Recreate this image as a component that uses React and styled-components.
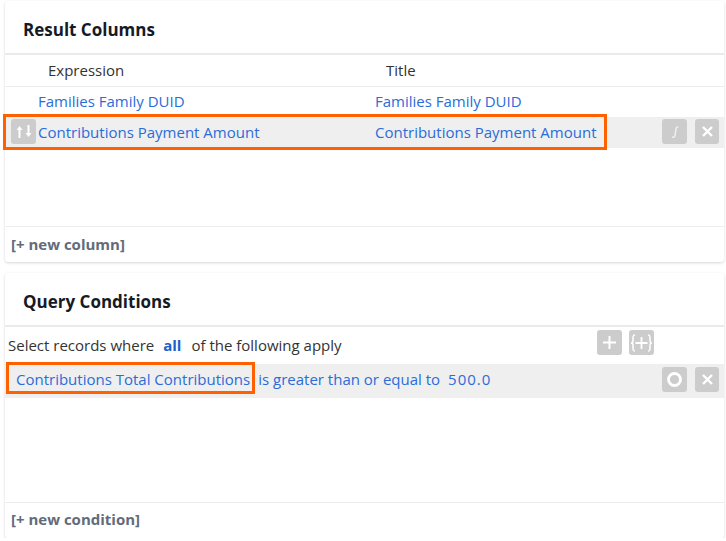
import styled, { createGlobalStyle } from "styled-components";

const GlobalStyle = createGlobalStyle`
  html, body {
    margin: 0;
    padding: 0;
    background: #fff;
  }
  body {
    font-family: "Open Sans", "Liberation Sans", sans-serif;
    font-size: 15px;
    color: #333;
  }
`;

function ArrowsIcon() {
  return (
    <svg width="16" height="13" viewBox="0 0 16 13" fill="none" stroke="#fff" strokeWidth="2">
      <path d="M3.500 13V4" />
      <path d="M12.500 0v9" />
      <path d="M.5 5 3.500 1 6.500 5" fill="#fff" stroke="none" />
      <path d="M9.500 8 12.500 12 15.500 8" fill="#fff" stroke="none" />
    </svg>
  );
}

function FunctionIcon() {
  return (
    <svg width="8" height="12" viewBox="0 0 8 12" fill="none" stroke="#eeeeee" strokeWidth="1.600">
      <path d="M7.500 1C5.800.7 5.200 1.400 5 3L4 9.500C3.800 11 3 11.500 1 11" />
    </svg>
  );
}

function CloseIcon() {
  return (
    <svg width="11" height="11" viewBox="0 0 11 11" fill="none" stroke="#fff" strokeWidth="2.400">
      <path d="M1 1l9 9M10 1l-9 9" />
    </svg>
  );
}

function PlusIcon() {
  return (
    <svg width="13" height="13" viewBox="0 0 13 13" fill="none" stroke="#fff" strokeWidth="2">
      <path d="M6.500 0v13M0 6.500h13" />
    </svg>
  );
}

function GroupIcon() {
  return (
    <svg width="23" height="18" viewBox="0 0 23 18" fill="none" stroke="#fff" strokeWidth="1.500">
      <path d="M5 1C3 1 3 2 3 4v3C3 8 2.400 9 1 9c1.400 0 2 1 2 2v3c0 2 0 3 2 3" />
      <path d="M18 1c2 0 2 1 2 3v3c0 1 .6 2 2 2-1.400 0-2 1-2 2v3c0 2 0 3-2 3" />
      <path d="M11.500 3v12M5.500 9h12" strokeWidth="1.800" />
    </svg>
  );
}

function CircleIcon() {
  return (
    <svg width="15" height="15" viewBox="0 0 15 15" fill="none" stroke="#fff" strokeWidth="2.800">
      <circle cx="7.500" cy="7.500" r="6" />
    </svg>
  );
}

export default function App() {
  return (
    <Page>
      <GlobalStyle />
      <Card>
        <CardHeader>Result Columns</CardHeader>
        <ColumnHead>
          <HeadCell>Expression</HeadCell>
          <HeadCell>Title</HeadCell>
        </ColumnHead>
        <ColumnBody>
          <ColumnRow>
            <Link>Families Family DUID</Link>
            <Link>Families Family DUID</Link>
          </ColumnRow>
          <ColumnRow $active>
            <Handle>
              <ArrowsIcon />
            </Handle>
            <Link>Contributions Payment Amount</Link>
            <Link>Contributions Payment Amount</Link>
            <RowActions>
              <IconButton>
                <FunctionIcon />
              </IconButton>
              <IconButton $narrow>
                <CloseIcon />
              </IconButton>
            </RowActions>
            <ColumnHighlight />
          </ColumnRow>
        </ColumnBody>
        <CardFooter>[+ new column]</CardFooter>
      </Card>

      <Card $second>
        <CardHeader>Query Conditions</CardHeader>
        <ConditionBody>
          <MatchRow>
            <span>Select records where</span>
            <MatchKeyword>all</MatchKeyword>
            <span>of the following apply</span>
            <MatchActions>
              <IconButton>
                <PlusIcon />
              </IconButton>
              <IconButton>
                <GroupIcon />
              </IconButton>
            </MatchActions>
          </MatchRow>
          <ConditionRow>
            <Link>Contributions Total Contributions</Link>
            <Link>is greater than or equal to</Link>
            <Link $value>500.0</Link>
            <RowActions $condition>
              <IconButton>
                <CircleIcon />
              </IconButton>
              <IconButton $narrow>
                <CloseIcon />
              </IconButton>
            </RowActions>
            <ConditionHighlight />
          </ConditionRow>
        </ConditionBody>
        <CardFooter $second>[+ new condition]</CardFooter>
      </Card>
    </Page>
  );
}

const Page = styled.div`
  width: 719px;
  padding: 1px 2px 0 5px;
  display: flex;
  flex-direction: column;
  gap: 11px;
`;

const Card = styled.section`
  height: ${(props) => (props.$second ? "265px" : "261px")};
  display: flex;
  flex-direction: column;
  background: #fff;
  border-radius: 3px;
  box-shadow: 0 1px 3px rgba(0, 0, 0, 0.16);
`;

const CardHeader = styled.h2`
  box-sizing: border-box;
  height: 54px;
  margin: 0;
  padding: 4px 18px 0;
  display: flex;
  align-items: center;
  border-bottom: 2px solid #eaeaea;
  font-size: 17px;
  font-weight: 700;
  color: #151b26;
`;

const ColumnHead = styled.div`
  box-sizing: border-box;
  height: 32px;
  padding: 0 0 2px 43px;
  display: grid;
  grid-template-columns: 338px 1fr;
  align-items: center;
  border-bottom: 1px solid #ededed;
`;

const HeadCell = styled.span`
  color: #333;
`;

const ColumnBody = styled.div`
  flex: 1;
`;

const ColumnRow = styled.div`
  position: relative;
  box-sizing: border-box;
  height: ${(props) => (props.$active ? "31px" : "30px")};
  padding: 0 0 2px 33px;
  display: grid;
  grid-template-columns: 337px 1fr;
  align-items: center;
  background: ${(props) => (props.$active ? "#efefef" : "transparent")};
`;

const Link = styled.a`
  color: #2b6cd9;
  white-space: nowrap;
  letter-spacing: ${(props) => (props.$value ? "1px" : "normal")};
`;

const IconButton = styled.button`
  width: ${(props) => (props.$narrow ? "24px" : "25px")};
  height: 25px;
  padding: 0;
  border: 0;
  border-radius: 3px;
  background: #cccccc;
  display: flex;
  align-items: center;
  justify-content: center;
`;

const Handle = styled(IconButton)`
  position: absolute;
  left: 6px;
  top: 2px;
`;

const RowActions = styled.div`
  position: absolute;
  right: 5px;
  top: ${(props) => (props.$condition ? "3px" : "2px")};
  display: flex;
  gap: 8px;
`;

const ColumnHighlight = styled.div`
  position: absolute;
  left: -2px;
  top: -3px;
  width: 604px;
  height: 36px;
  box-sizing: border-box;
  border: 3px solid #ff6000;
  pointer-events: none;
`;

const CardFooter = styled.div`
  box-sizing: border-box;
  height: 36px;
  padding: 0 0 ${(props) => (props.$second ? "4px" : "2px")} 6px;
  display: flex;
  align-items: center;
  border-top: 1px solid #ededed;
  font-weight: 700;
  color: #626b7a;
`;

const ConditionBody = styled.div`
  flex: 1;
`;

const MatchRow = styled.div`
  position: relative;
  box-sizing: border-box;
  height: 37px;
  padding: 0 0 1px 3px;
  display: flex;
  align-items: center;
  gap: 9px;
`;

const MatchKeyword = styled.strong`
  color: #1f5fc9;
  font-weight: 700;
  margin-right: 1px;
`;

const MatchActions = styled.div`
  position: absolute;
  left: 592px;
  top: 3px;
  display: flex;
  gap: 7px;
`;

const ConditionRow = styled.div`
  position: relative;
  box-sizing: border-box;
  height: 34px;
  padding: 0 0 4px 11px;
  display: flex;
  align-items: center;
  gap: 8px;
  background: #efefef;
`;

const ConditionHighlight = styled.div`
  position: absolute;
  left: 1px;
  top: -2px;
  width: 249px;
  height: 32px;
  box-sizing: border-box;
  border: 3px solid #ff6000;
  pointer-events: none;
`;
